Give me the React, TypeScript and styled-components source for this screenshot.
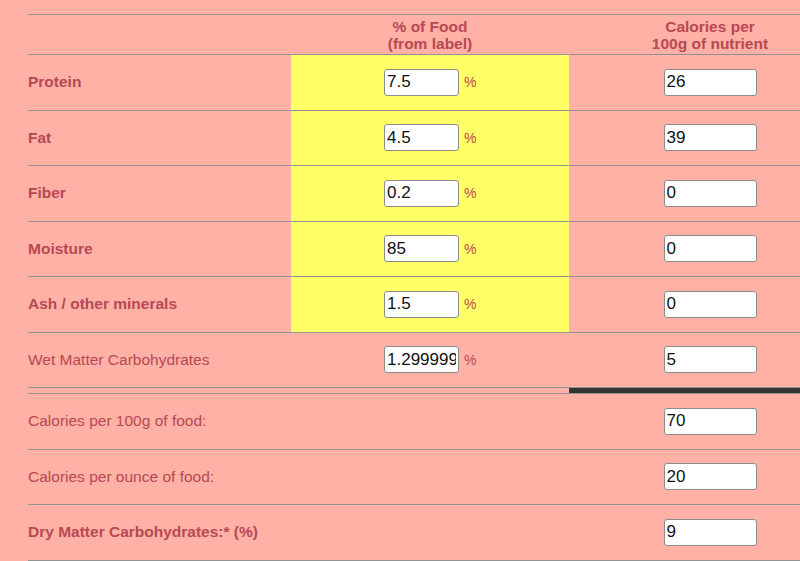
import React from "react";
import styled, { createGlobalStyle } from "styled-components";

const Global = createGlobalStyle`
  html, body { margin: 0; padding: 0; background: #ffb1a6; }
  body { font-family: "Liberation Sans", Arial, sans-serif; overflow: hidden; }
`;

const Page = styled.div`
  width: 800px;
  height: 561px;
  overflow: hidden;
  padding: 14px 0 0 28px;
  box-sizing: border-box;
  background: #ffb1a6;
`;

const Table = styled.table`
  border-collapse: collapse;
  table-layout: fixed;
  width: 823px;
  border-top: 1px solid #939393;
  color: #b84853;
  font-size: 15.5px;
`;

const HeadCell = styled.th`
  height: 39px;
  padding: 0;
  font-weight: bold;
  line-height: 17px;
  text-align: center;
  vertical-align: middle;
  border-bottom: 1px solid #939393;
`;

const Cell = styled.td<{ $yellow?: boolean; $center?: boolean; $bold?: boolean }>`
  height: 54.5px;
  padding: 0;
  border-bottom: 1px solid #939393;
  background: ${(p) => (p.$yellow ? "#ffff66" : "transparent")};
  text-align: ${(p) => (p.$center ? "center" : "left")};
  font-weight: ${(p) => (p.$bold ? "bold" : "normal")};
  vertical-align: middle;
  white-space: nowrap;
`;

const SepCell = styled.td<{ $dark?: boolean }>`
  height: 5px;
  padding: 0;
  border-top: 1px solid #939393;
  border-bottom: 1px solid #939393;
  background: ${(p) => (p.$dark ? "#333" : "transparent")};
`;

const Field = styled.input<{ $w: number }>`
  width: ${(p) => p.$w}px;
  height: 27px;
  box-sizing: border-box;
  border: 1px solid #8c8c8c;
  border-radius: 3px;
  background: #fff;
  padding: 0 2px;
  font-family: "Liberation Sans", Arial, sans-serif;
  font-size: 17px;
  color: #111;
  vertical-align: middle;
  outline: none;
`;

const Pct = styled.span`
  display: inline-block;
  margin-left: 5px;
  width: 12px;
  font-size: 14px;
  vertical-align: middle;
  text-align: left;
`;

const Group = styled.span`
  display: inline-flex;
  align-items: center;
`;

type Row = { label: string; pct: string; cal: string; bold: boolean; yellow: boolean };

const rows: Row[] = [
  { label: "Protein", pct: "7.5", cal: "26", bold: true, yellow: true },
  { label: "Fat", pct: "4.5", cal: "39", bold: true, yellow: true },
  { label: "Fiber", pct: "0.2", cal: "0", bold: true, yellow: true },
  { label: "Moisture", pct: "85", cal: "0", bold: true, yellow: true },
  { label: "Ash / other minerals", pct: "1.5", cal: "0", bold: true, yellow: true },
  { label: "Wet Matter Carbohydrates", pct: "1.2999999999999998", cal: "5", bold: false, yellow: false },
];

const totals = [
  { label: "Calories per 100g of food:", val: "70", bold: false },
  { label: "Calories per ounce of food:", val: "20", bold: false },
  { label: "Dry Matter Carbohydrates:* (%)", val: "9", bold: true },
];

export default function App() {
  return (
    <>
      <Global />
      <Page>
        <Table>
          <colgroup>
            <col style={{ width: 263 }} />
            <col style={{ width: 278 }} />
            <col style={{ width: 282 }} />
          </colgroup>
          <thead>
            <tr>
              <HeadCell />
              <HeadCell>
                % of Food
                <br />
                (from label)
              </HeadCell>
              <HeadCell>
                Calories per
                <br />
                100g of nutrient
              </HeadCell>
            </tr>
          </thead>
          <tbody>
            {rows.map((r) => (
              <tr key={r.label}>
                <Cell $bold={r.bold}>{r.label}</Cell>
                <Cell $yellow={r.yellow} $center>
                  <Group>
                    <Field $w={75} defaultValue={r.pct} />
                    <Pct>%</Pct>
                  </Group>
                </Cell>
                <Cell $center>
                  <Field $w={93} defaultValue={r.cal} />
                </Cell>
              </tr>
            ))}
            <tr>
              <SepCell />
              <SepCell />
              <SepCell $dark />
            </tr>
            {totals.map((t) => (
              <tr key={t.label}>
                <Cell $bold={t.bold}>{t.label}</Cell>
                <Cell />
                <Cell $center>
                  <Field $w={93} defaultValue={t.val} />
                </Cell>
              </tr>
            ))}
          </tbody>
        </Table>
      </Page>
    </>
  );
}
